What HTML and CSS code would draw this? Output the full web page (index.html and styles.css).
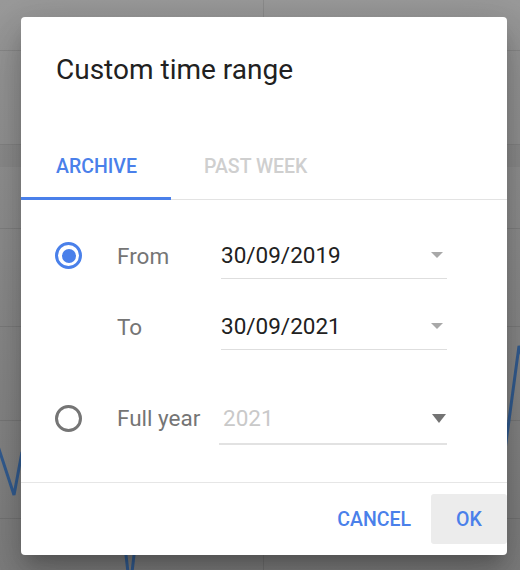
FILE: index.html
```html
<!DOCTYPE html>
<html lang="en">
<head>
<meta charset="utf-8">
<title>Custom time range</title>
<link rel="stylesheet" href="styles.css">
</head>
<body>
<div class="screen">
  <!-- dimmed chart behind the dialog -->
  <svg class="backdrop" width="520" height="570" viewBox="0 0 520 570" aria-hidden="true">
    <defs>
      <linearGradient id="dim" x1="0" y1="0" x2="0" y2="1">
        <stop offset="0" stop-color="#9a9a9a"/>
        <stop offset="1" stop-color="#7e7e7e"/>
      </linearGradient>
    </defs>
    <rect width="520" height="570" fill="url(#dim)"/>
    <rect x="0" y="145" width="520" height="22" fill="#000" fill-opacity="0.035"/>
    <g stroke="#000" stroke-opacity="0.09" stroke-width="1">
      <line x1="0" y1="50.5" x2="520" y2="50.5"/>
      <line x1="0" y1="144.5" x2="520" y2="144.5"/>
      <line x1="0" y1="228.5" x2="520" y2="228.5"/>
      <line x1="0" y1="326.5" x2="520" y2="326.5"/>
      <line x1="0" y1="420.5" x2="520" y2="420.5"/>
      <line x1="0" y1="518.5" x2="520" y2="518.5"/>
      <line x1="263.5" y1="0" x2="263.5" y2="570"/>
    </g>
    <g fill="none" stroke="#335d92" stroke-width="3" stroke-linejoin="miter">
      <polyline points="-4,440 14,495 22,452"/>
      <polyline points="122,520 130,590 138,520"/>
      <polyline points="505,450 519,346 523,360"/>
    </g>
  </svg>

  <div class="dialog" role="dialog" aria-labelledby="dlg-title">
    <h2 class="dialog-title" id="dlg-title">Custom time range</h2>

    <div class="tabs">
      <div class="tab tab-active">ARCHIVE</div>
      <div class="tab">PAST WEEK</div>
    </div>

    <div class="dialog-body">
      <div class="range-grid">
        <span class="radio radio-on"></span>
        <span class="label">From</span>
        <div class="select">
          <span class="value">30/09/2019</span>
          <span class="caret"></span>
        </div>

        <span class="spacer"></span>
        <span class="label">To</span>
        <div class="select">
          <span class="value">30/09/2021</span>
          <span class="caret"></span>
        </div>
      </div>

      <div class="year-row">
        <span class="radio"></span>
        <span class="label">Full year</span>
        <div class="select select-disabled">
          <span class="value">2021</span>
          <span class="caret caret-dark"></span>
        </div>
      </div>
    </div>

    <div class="dialog-actions">
      <button class="btn" type="button">CANCEL</button>
      <button class="btn btn-ok" type="button">OK</button>
    </div>
  </div>
</div>
</body>
</html>
```

FILE: styles.css
```css
* {
  box-sizing: border-box;
}

html,
body {
  margin: 0;
  padding: 0;
}

body {
  font-family: Roboto, "Noto Sans", "Liberation Sans", sans-serif;
  color: #212121;
  background: #8c8c8c;
}

.screen {
  position: relative;
  width: 520px;
  height: 570px;
  overflow: hidden;
}

.backdrop {
  display: block;
}

/* dialog floats over the dimmed page */
.dialog {
  position: absolute;
  left: 21px;
  top: 17px;
  width: 486px;
  height: 538px;
  background: #fff;
  border-radius: 4px;
  overflow: hidden;
  display: flex;
  flex-direction: column;
  box-shadow: 0 11px 15px -7px rgba(0, 0, 0, 0.2),
              0 24px 38px 3px rgba(0, 0, 0, 0.14),
              0 9px 46px 8px rgba(0, 0, 0, 0.12);
}

.dialog-title {
  margin: 0;
  padding: 36px 0 56px 35px;
  font-size: 28px;
  font-weight: 400;
  line-height: 34px;
  color: #212121;
}

/* tab strip */
.tabs {
  display: flex;
  border-bottom: 1px solid #e3e3e3;
}

.tab {
  position: relative;
  padding: 0 34px 8px 35px;
  line-height: 48px;
  font-size: 19.5px;
  font-weight: 500;
  color: #cfcfcf;
}

.tab + .tab {
  padding-left: 33px;
}

.tab-active {
  color: #4a80ea;
}

.tab-active::after {
  content: "";
  position: absolute;
  left: 0;
  right: 0;
  bottom: -1px;
  height: 3px;
  background: #4a80ea;
}

/* form rows */
.dialog-body {
  flex: 1;
  padding: 32px 0 0 34px;
}

.range-grid,
.year-row {
  display: grid;
  grid-template-columns: 27px 35px 104px 226px;
  align-items: center;
}

.range-grid {
  row-gap: 24px;
}

.label {
  grid-column: 3;
  font-size: 22.5px;
  color: #757575;
  line-height: 46px;
}

.select {
  grid-column: 4;
  display: flex;
  align-items: center;
  justify-content: space-between;
  height: 47px;
  border-bottom: 1px solid #dedede;
}

.radio,
.spacer {
  grid-column: 1;
}

.year-row {
  margin-top: 45px;
  align-items: start;
}

.radio {
  width: 27px;
  height: 27px;
  border-radius: 50%;
  border: 3px solid #757575;
  display: flex;
  align-items: center;
  justify-content: center;
}

.year-row .radio {
  margin-top: 9.5px;
}

.radio-on {
  border-color: #4a80ea;
}

.radio-on::before {
  content: "";
  width: 14px;
  height: 14px;
  border-radius: 50%;
  background: #4a80ea;
}

.value {
  font-size: 22.5px;
  line-height: 46px;
  color: #212121;
}

.caret {
  width: 0;
  height: 0;
  margin-right: 4px;
  border-left: 6px solid transparent;
  border-right: 6px solid transparent;
  border-top: 6px solid #a8a8a8;
}

.select-disabled {
  height: 50px;
  margin-left: -2px;
  padding-left: 4px;
  padding-bottom: 2px;
  border-bottom: 2px solid #e2e2e2;
}

.select-disabled .value {
  color: #c9c9c9;
}

.caret-dark {
  margin-right: 1px;
  border-left-width: 7px;
  border-right-width: 7px;
  border-top: 9px solid #737373;
}

/* footer buttons */
.dialog-actions {
  display: flex;
  justify-content: flex-end;
  align-items: center;
  border-top: 1px solid #e6e6e6;
  padding: 11px 0;
}

.btn {
  font-family: inherit;
  font-size: 19.5px;
  font-weight: 500;
  color: #4a80ea;
  background: none;
  border: 0;
  border-radius: 3px;
  height: 50px;
  padding: 0 20px;
  cursor: pointer;
}

.btn-ok {
  width: 76px;
  padding: 0;
  background: #ececec;
}
```
